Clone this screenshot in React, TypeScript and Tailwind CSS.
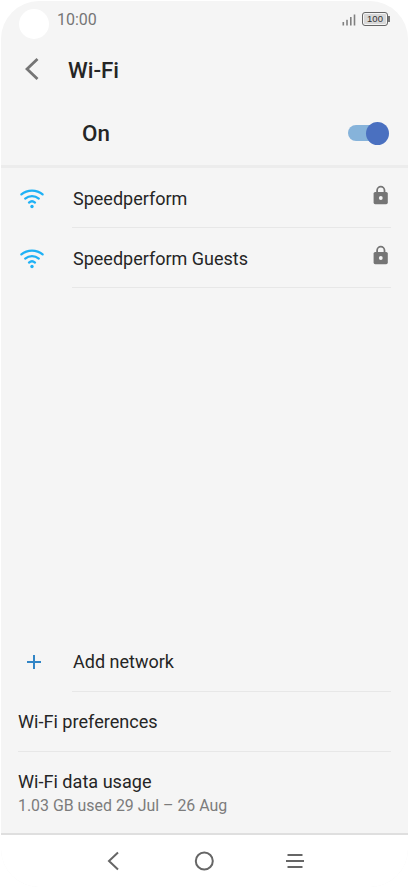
import { type ReactNode } from 'react'

interface Network {
  name: string
}

const NETWORKS: Network[] = [
  { name: 'Speedperform' },
  { name: 'Speedperform Guests' }
]

const WifiIcon = () => (
  <svg className="mt-px" width="26" height="22" viewBox="0 0 26 22" fill="none" stroke="#1fb1f5" strokeWidth="2.3" strokeLinecap="round">
    <path d="M2.4 6.4C8.4 1.3 17.6 1.3 23.6 6.4" />
    <path d="M6.2 10.6C10.2 7.3 15.8 7.3 19.8 10.6" />
    <path d="M10 14.6C11.8 13 14.2 13 16 14.6" />
    <circle cx="13" cy="18.5" r="1.7" fill="#1fb1f5" stroke="none" />
  </svg>
)

const LockIcon = () => (
  <svg width="16" height="20" viewBox="0 0 16 20" fill="none">
    <path d="M4.1 8V5.4a3.7 3.7 0 0 1 7.4 0V8" stroke="#757575" strokeWidth="1.8" />
    <rect x="0.6" y="7" width="14.2" height="12.2" rx="1.6" fill="#757575" />
    <circle cx="7.8" cy="13" r="1.9" fill="#f5f5f5" />
  </svg>
)

const StatusBar = () => (
  <div className="relative flex h-9 shrink-0 items-center justify-between pr-[18px] pl-14 text-[#757575]">
    {/* Camera cutout */}
    <div className="absolute top-2 left-[18px] h-[30px] w-[30px] rounded-full bg-white" />
    <span className="mt-0.5 text-base">10:00</span>
    <div className="flex items-center gap-1.5">
      <svg className="mt-0.5" width="14" height="12" viewBox="0 0 14 12" fill="#808080">
        <rect x="0.5" y="8" width="1.6" height="3.5" />
        <rect x="4.2" y="5.8" width="1.6" height="5.7" />
        <rect x="8" y="3" width="1.6" height="8.5" />
        <rect x="11.7" y="0.5" width="1.6" height="11" />
      </svg>
      <div className="flex items-center">
        <div className="flex h-[14px] w-[26px] items-center justify-center rounded-[3px] border border-[#666] bg-[#d8d8d8] font-['Liberation_Sans'] text-[9.5px] text-[#333] ring-1 ring-[#f5f5f5] ring-inset">
          100
        </div>
        <div className="h-1.5 w-[2px] bg-[#757575]" />
      </div>
    </div>
  </div>
)

const Row = ({ icon, trailing, children }: { icon: ReactNode; trailing?: ReactNode; children: ReactNode }) => (
  <div className="flex h-[60px] pr-[17px]">
    <div className="flex w-[71px] shrink-0 items-center pl-[18px]">{icon}</div>
    <div className="flex flex-1 items-center justify-between border-b border-[#e7e7e7] text-lg">
      <span className="pl-px">{children}</span>
      {trailing}
    </div>
  </div>
)

export default function App() {
  return (
    <div className="h-[888px] w-[409px] overflow-hidden bg-white pt-px pl-px font-[Roboto,sans-serif] text-[#252525]">
      <div className="flex h-[886px] w-[407px] flex-col overflow-hidden rounded-[38px] bg-[#f5f5f5]">
        <StatusBar />

        <header className="flex h-16 shrink-0 items-center pl-6">
          <svg width="14" height="24" viewBox="0 0 14 24" fill="none" stroke="#757575" strokeWidth="2.8">
            <path d="M12.5 2L2 12L12.5 22" />
          </svg>
          <h1 className="mt-[3px] ml-[29px] text-[22.4px] font-medium">Wi-Fi</h1>
        </header>

        <div className="flex h-[67px] shrink-0 items-center justify-between border-b-[3px] border-[#ececec] pr-[19px] pl-[81px]">
          <span className="pt-0.5 text-[22.4px] font-medium">On</span>
          <div className="flex h-4 w-[41px] items-center justify-end">
            <div className="-mr-3 h-4 w-[30px] shrink-0 rounded-full bg-[#86b3da]" />
            <div className="z-10 h-[23px] w-[23px] shrink-0 rounded-full bg-[#4a70c0]" />
          </div>
        </div>

        <main className="flex-1">
          {NETWORKS.map((network) => (
            <Row
              key={network.name}
              icon={<WifiIcon />}
              trailing={<div className="-mt-1.5 mr-0.5"><LockIcon /></div>}
            >
              <span className="block pt-0.5">{network.name}</span>
            </Row>
          ))}
        </main>

        {/* Bottom actions */}
        <Row
          icon={
            <svg width="30" height="16" viewBox="0 0 30 16" stroke="#3185c6" strokeWidth="2">
              <path d="M15 1v14M8 8h14" />
            </svg>
          }
        >
          <span className="block pt-px">Add network</span>
        </Row>
        <div className="mr-[17px] ml-[17px] flex h-[60px] shrink-0 items-center border-b border-[#e7e7e7] text-[18.1px]">
          Wi-Fi preferences
        </div>
        <div className="flex h-[83px] shrink-0 flex-col border-b-2 border-[#dfdfdf] pt-[17px] pl-[17px]">
          <span className="text-[18.1px] leading-[26px]">Wi-Fi data usage</span>
          <span className="pt-px text-[15.9px] leading-5 text-[#7c7c7c]">1.03 GB used 29 Jul – 26 Aug</span>
        </div>

        <nav className="flex h-[52px] shrink-0 items-center bg-white pl-[105px]">
          <svg width="14" height="20" viewBox="0 0 14 20" fill="none" stroke="#666" strokeWidth="2">
            <path d="M12 1.5L3 10L12 18.5" />
          </svg>
          <svg className="ml-[74px]" width="20" height="20" viewBox="0 0 20 20" fill="none" stroke="#666" strokeWidth="2">
            <circle cx="10.3" cy="10" r="8.5" />
          </svg>
          <svg className="ml-[71px]" width="20" height="16" viewBox="0 0 20 16" stroke="#666" strokeWidth="2">
            <path d="M2.5 2h15M1 8h18M2.5 14h15" />
          </svg>
        </nav>
      </div>
    </div>
  )
}
